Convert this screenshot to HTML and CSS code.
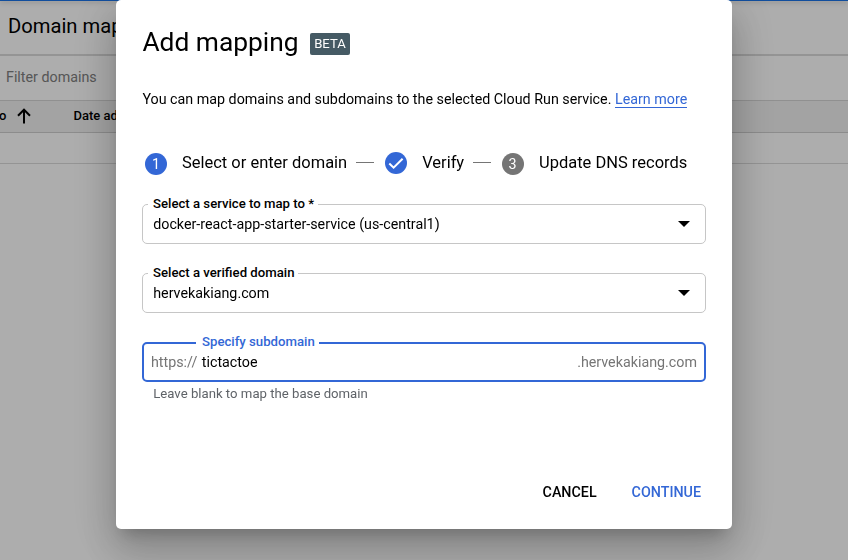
FILE: index.html
```html
<!DOCTYPE html>
<html lang="en">
<head>
<meta charset="utf-8">
<title>Domain mappings</title>
<link rel="stylesheet" href="styles.css">
</head>
<body>
<main class="page">
  <div class="topbar"></div>
  <header class="page-title">Domain mappings</header>
  <div class="filter">Filter domains</div>
  <div class="table-head">
    <span class="col-sort">o</span>
    <svg class="sort-icon" width="14" height="16" viewBox="0 0 14 16"><path d="M7 15.5V2M1 7.7L7 1.7l6 6" fill="none" stroke="#000" stroke-width="2"/></svg>
    <span class="col-date">Date added</span>
  </div>
  <div class="table-row"></div>
</main>
<div class="overlay">
  <section class="dialog" role="dialog">
    <div class="heading"><h1>Add mapping</h1><span class="badge">BETA</span></div>
    <p class="intro">You can map domains and subdomains to the selected Cloud Run service. <a class="link" href="#">Learn more</a></p>
    <div class="stepper">
      <span class="dot">1</span><span class="step-name">Select or enter domain</span><span class="dash"></span>
      <span class="dot done"><svg width="22" height="22" viewBox="0 0 22 22"><path d="M4.3 11.5l4.3 4.2 9-9" fill="none" stroke="#fff" stroke-width="2"/></svg></span><span class="step-name">Verify</span><span class="dash"></span>
      <span class="dot pending">3</span><span class="step-name">Update DNS records</span>
    </div>
    <div class="field">
      <label class="label">Select a service to map to *</label>
      <span class="value">docker-react-app-starter-service (us-central1)</span>
      <svg class="caret" width="12" height="6" viewBox="0 0 12 6"><path d="M0 0h12L6 6z"/></svg>
    </div>
    <div class="field">
      <label class="label">Select a verified domain</label>
      <span class="value">hervekakiang.com</span>
      <svg class="caret" width="12" height="6" viewBox="0 0 12 6"><path d="M0 0h12L6 6z"/></svg>
    </div>
    <div class="field focused">
      <label class="label">Specify subdomain</label>
      <span class="prefix">https://</span>
      <span class="value">tictactoe</span>
      <span class="suffix">.hervekakiang.com</span>
    </div>
    <div class="hint">Leave blank to map the base domain</div>
    <div class="actions"><span class="button">CANCEL</span><span class="button primary">CONTINUE</span></div>
  </section>
</div>
</body>
</html>
```
FILE: styles.css
```css
* { box-sizing: border-box; }
body { margin: 0; height: 560px; overflow: hidden; font-family: Roboto, sans-serif; font-size: 14.29px; color: #000; background: #fff; }
.page { height: 560px; white-space: nowrap; }
.topbar { height: 1px; background: #1a73e8; box-shadow: 0 1px 5px rgba(0,0,0,.45); }
.page-title { height: 55px; padding: 11px 0 0 8px; border-bottom: 2px solid #dadada; font-size: 20.2px; line-height: 28px; }
.filter { height: 45px; padding-left: 6px; border-bottom: 1px solid #d5d5d5; line-height: 42px; color: #808080; }
.table-head { display: flex; align-items: center; height: 32px; background: #f1f1f1; border-bottom: 1px solid #cecece; font-size: 13px; font-weight: 500; }
.col-sort, .col-date { line-height: 16px; padding-bottom: 2px; }
.col-sort { width: 17px; text-indent: -1px; }
.sort-icon { display: block; margin-bottom: 1px; }
.col-date { margin-left: 42.5px; }
.table-row { height: 31px; border-bottom: 1px solid #dadada; }
.overlay { position: fixed; inset: 0; background: rgba(0,0,0,.32); }
.dialog { width: 616px; height: 529px; margin: 0 auto; padding: 26px 26px 0; background: #fff; border-radius: 5px; box-shadow: 0 11px 15px -7px rgba(0,0,0,.2), 0 24px 38px 3px rgba(0,0,0,.14), 0 9px 46px 8px rgba(0,0,0,.12); display: flex; flex-direction: column; }
.heading { display: flex; align-items: flex-start; height: 60px; padding-left: .4px; }
h1 { margin: 0; width: 155.6px; white-space: nowrap; font-size: 26.35px; line-height: 32px; font-weight: 400; }
.badge { margin: 7px 0 0 12px; width: 40px; height: 22px; border-radius: 2px; background: #455a64; color: #fff; font-size: 13.1px; line-height: 21px; text-align: center; }
.intro { margin: 0; height: 66px; padding: 4px 0 0 .4px; line-height: 18px; white-space: nowrap; }
.link { color: #3367d6; text-decoration: none; border-bottom: 1px solid #3367d6; }
.stepper { display: flex; height: 22px; padding-left: 3px; white-space: nowrap; }
.dot { flex: none; width: 22px; height: 22px; margin-top: 1px; border-radius: 50%; background: #3367d6; color: #fff; font-size: 14.29px; line-height: 22px; text-align: center; }
.done { margin: 0 0 0 11px; }
.done svg { display: block; }
.pending { margin-left: 11px; background: #757575; }
.step-name { font-size: 16.48px; line-height: 22px; margin-left: 15px; }
.done + .step-name { margin-left: 15.6px; }
.pending + .step-name { margin-left: 15.5px; }
.dash { flex: none; width: 18px; height: 1px; margin: 10px 0 0 8.4px; background: #757575; }
.field { position: relative; display: flex; flex: none; align-items: center; height: 40px; margin-top: 29px; padding: 0 15px 0 10.2px; border: 1px solid #c6c6c6; border-radius: 5px; }
.stepper + .field { margin-top: 30px; }
.label { position: absolute; top: -9px; left: 5px; padding: 0 4px 0 5px; background: #fff; font-size: 13.18px; line-height: 16px; font-weight: 500; white-space: nowrap; }
.caret { display: block; margin-left: auto; }
.focused { border: 2px solid #3367d6; padding: 0 7px; }
.focused .label { left: 52px; top: -10px; padding: 0 4px 0 6px; color: #3367d6; }
.prefix, .suffix { color: #757575; }
.prefix { margin-right: 4.5px; }
.suffix { margin-left: auto; }
.hint { margin: 4px 0 0 11.2px; font-size: 13.18px; line-height: 16px; color: #5f6368; }
.actions { display: flex; justify-content: flex-end; gap: 35px; margin-top: 81px; padding-right: 5px; }
.button { font-weight: 500; line-height: 18px; }
.primary { color: #3367d6; }
```
